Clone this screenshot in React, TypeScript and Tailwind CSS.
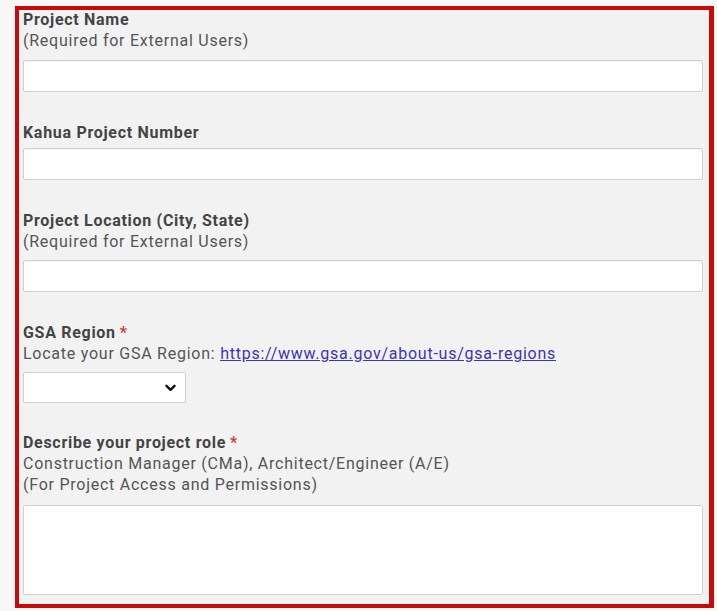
import React from 'react';

const fieldBox =
	'block w-full h-[32px] bg-white border border-[#cfcfcf] rounded-[2px] shadow-[inset_0_1px_1px_rgba(0,0,0,0.04)]';

const Label: React.FC<{ text: string; required?: boolean }> = ({ text, required }) => (
	<div className="font-bold text-[16px] leading-[21px] tracking-[0.7px] text-[#444]">
		{text}
		{required && <span className="text-[#d83a3a] ml-[4px]">*</span>}
	</div>
);

const Hint: React.FC<{ children: React.ReactNode }> = ({ children }) => (
	<div className="text-[16px] leading-[21px] tracking-[0.75px] text-[#555]">{children}</div>
);

const App: React.FC = () => {
	return (
		<div
			className="w-[717px] h-[611px] bg-[#f7f7f7] pt-[6px] pl-[15px]"
			style={{ fontFamily: 'Roboto, "Liberation Sans", Arial, sans-serif' }}
		>
			<div className="w-[699px] h-[602px] border-4 border-r-[5px] border-[#c80a0a] bg-[#f2f2f2] pl-[4px] pr-[6px]">
				<div className="flex flex-col gap-[30px] -mt-[1px]">
					{/* Project name */}
					<div>
						<Label text="Project Name" />
						<Hint>(Required for External Users)</Hint>
						<input type="text" className={`${fieldBox} mt-[9px]`} />
					</div>

					{/* Kahua number */}
					<div>
						<Label text="Kahua Project Number" />
						<input type="text" className={`${fieldBox} mt-[5px]`} />
					</div>

					{/* Location */}
					<div>
						<Label text="Project Location (City, State)" />
						<Hint>(Required for External Users)</Hint>
						<input type="text" className={`${fieldBox} mt-[8px]`} />
					</div>

					{/* GSA region */}
					<div>
						<Label text="GSA Region" required />
						<Hint>
							Locate your GSA Region:{' '}
							<a href="#" className="text-[#3a35b8] underline">
								https://www.gsa.gov/about-us/gsa-regions
							</a>
						</Hint>
						<div className="relative mt-[8px] w-[163px] h-[31px] bg-white border border-[#cfcfcf] rounded-[2px]">
							<svg
								className="absolute left-[141px] top-[11px]"
								width="11"
								height="8"
								viewBox="0 0 11 8"
								fill="none"
							>
								<path d="M1.5 1.8 5.5 5.8 9.5 1.8" stroke="#111" strokeWidth="2.4" strokeLinecap="round" strokeLinejoin="round" />
							</svg>
						</div>
					</div>

					{/* Role */}
					<div className="-mt-[1px]">
						<Label text="Describe your project role" required />
						<Hint>Construction Manager (CMa), Architect/Engineer (A/E)</Hint>
						<Hint>(For Project Access and Permissions)</Hint>
						<textarea className="block w-full h-[90px] mt-[10px] bg-white border border-[#cfcfcf] rounded-[2px] resize-none" />
					</div>
				</div>
			</div>
		</div>
	);
};

export default App;
